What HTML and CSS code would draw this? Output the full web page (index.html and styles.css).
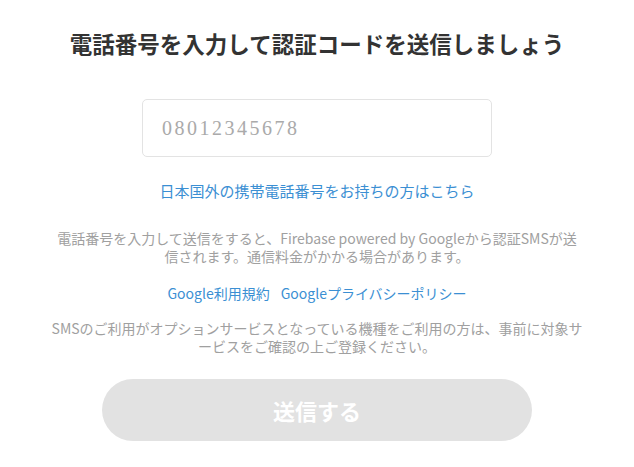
FILE: index.html
```html
<!DOCTYPE html>
<html lang="ja">
<head>
<meta charset="utf-8">
<link rel="stylesheet" href="styles.css">
</head>
<body>
<main class="page">
  <h1 class="title">電話番号を入力して認証コードを送信しましょう</h1>
  <input class="phone" type="tel" placeholder="08012345678">
  <a class="link intl" href="#">日本国外の携帯電話番号をお持ちの方はこちら</a>
  <p class="note">電話番号を入力して送信をすると、Firebase powered by Googleから認証SMSが送信されます。通信料金がかかる場合があります。</p>
  <div class="policies">
    <a class="link" href="#">Google利用規約</a>
    <a class="link" href="#">Googleプライバシーポリシー</a>
  </div>
  <p class="note">SMSのご利用がオプションサービスとなっている機種をご利用の方は、事前に対象サービスをご確認の上ご登録ください。</p>
  <button class="submit" type="button" disabled>送信する</button>
</main>
</body>
</html>
```
FILE: styles.css
```css
html, body {
  margin: 0;
  padding: 0;
  background: #fff;
}
body {
  font-family: "Noto Sans CJK JP", "Noto Sans", sans-serif;
  color: #333;
}
.page {
  display: flex;
  flex-direction: column;
  align-items: center;
  padding: 26px 51px 0;
}
.title {
  margin: 0;
  font-size: 22.5px;
  line-height: 34px;
  font-weight: 700;
  color: #333;
}
.phone {
  box-sizing: border-box;
  width: 350px;
  height: 58px;
  margin-top: 39px;
  padding: 0 19px;
  border: 1px solid #e3e3e3;
  border-radius: 5px;
  font-family: "Liberation Serif", serif;
  font-size: 20px;
  letter-spacing: 2.5px;
  color: #333;
  outline: none;
}
.phone::placeholder {
  color: #aaa;
}
.link {
  color: #3b8fd3;
  text-decoration: none;
}
.intl {
  margin-top: 22px;
  font-size: 15px;
  line-height: 24px;
}
.note {
  margin: 0;
  font-size: 14px;
  line-height: 18px;
  color: #a0a0a0;
  text-align: center;
}
.intl + .note {
  margin-top: 26px;
}
.policies {
  display: flex;
  gap: 11px;
  margin-top: 18px;
  margin-bottom: 16px;
  font-size: 14px;
  line-height: 20px;
}
.submit {
  width: 430px;
  height: 62px;
  margin-top: 24px;
  border: none;
  border-radius: 31px;
  background: #e2e2e2;
  color: #fff;
  font-family: inherit;
  font-size: 22px;
  font-weight: 700;
}
```
